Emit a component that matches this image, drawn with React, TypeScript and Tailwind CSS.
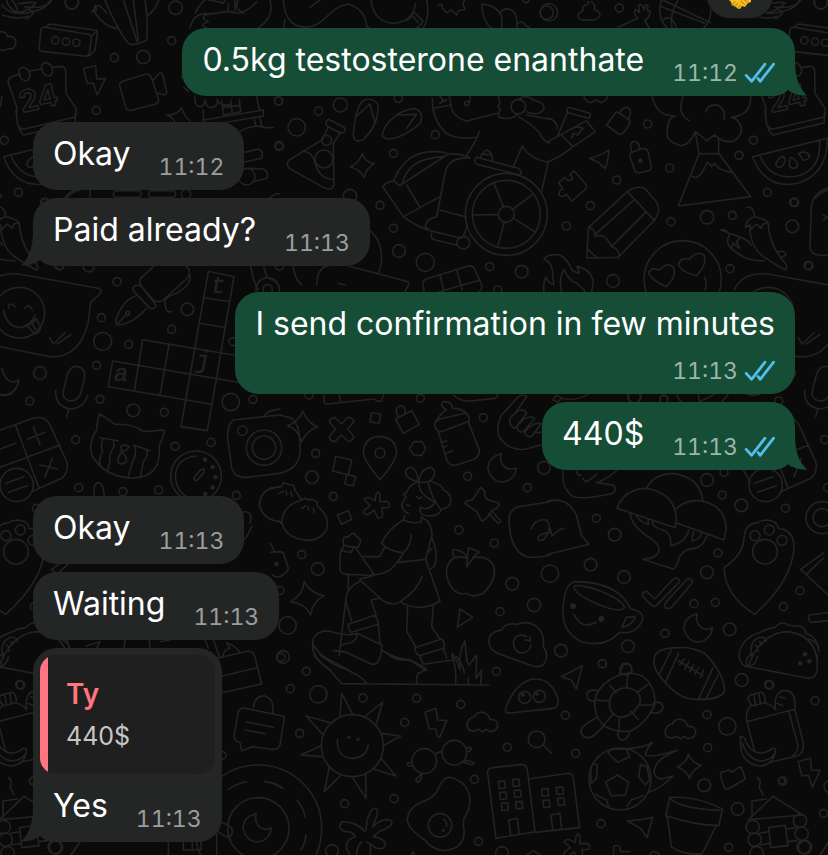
import React from 'react';
import clsx from 'clsx';

interface Quote {
  author: string;
  text: string;
}

interface Message {
  id: number;
  text: string;
  time: string;
  mine?: boolean;
  tail?: boolean;
  // time sits on its own line under the text
  stacked?: boolean;
  quote?: Quote;
}

const groups: Message[][] = [
  [{ id: 1, text: '0.5kg testosterone enanthate', time: '11:12', mine: true, tail: true }],
  [
    { id: 2, text: 'Okay', time: '11:12' },
    { id: 3, text: 'Paid already?', time: '11:13', tail: true },
  ],
  [
    { id: 4, text: 'I send confirmation in few minutes', time: '11:13', mine: true, stacked: true },
    { id: 5, text: '440$', time: '11:13', mine: true, tail: true },
  ],
  [
    { id: 6, text: 'Okay', time: '11:13' },
    { id: 7, text: 'Waiting', time: '11:13' },
    { id: 8, text: 'Yes', time: '11:13', tail: true, quote: { author: 'Ty', text: '440$' } },
  ],
];

export default function App() {
  return (
    <main className="relative min-h-screen overflow-hidden bg-[#0a0a0a] font-['Inter','Liberation_Sans',sans-serif]">
      <Wallpaper />
      <Reaction />
      <div className="relative flex flex-col gap-[26px] px-[33px] pt-7 pb-3">
        {groups.map((group) => (
          <ol key={group[0].id} className="flex flex-col gap-2">
            {group.map((message) => (
              <Bubble key={message.id} message={message} />
            ))}
          </ol>
        ))}
      </div>
    </main>
  );
}

function Bubble({ message }: { message: Message }) {
  const { text, time, mine, tail, stacked, quote } = message;

  return (
    <li
      className={clsx(
        'relative rounded-3xl',
        mine ? 'self-end bg-[#154d37] text-[#154d37]' : 'self-start bg-[#242626] text-[#242626]'
      )}
    >
      {tail && <Tail mine={mine} />}
      {quote && <QuoteBox quote={quote} />}
      <div className={clsx('relative flex px-5 pt-2.5 pb-[7px]', stacked ? 'flex-col gap-[9px]' : 'items-end gap-7')}>
        <p className={clsx('text-[32px] leading-[44px] text-white', !stacked && 'mb-[7px]')}>{text}</p>
        <div className="flex items-center gap-1.5 self-end">
          <time className={clsx('text-[23px] leading-8 tabular-nums', mine ? 'text-[#9bb5aa]' : 'text-[#9c9d9d]')}>
            {time}
          </time>
          {mine && <ReadTicks />}
        </div>
      </div>
    </li>
  );
}

function QuoteBox({ quote }: { quote: Quote }) {
  return (
    <div className="px-[7px] pt-[7px]">
      <blockquote className="flex overflow-hidden rounded-2xl bg-[#1f1f1f]">
        <span className="w-2 bg-[#ff7580]" />
        <div className="py-[18px] pl-[18px]">
          <cite className="block text-[28px] leading-[43px] font-semibold text-[#ff7580] not-italic">{quote.author}</cite>
          <p className="text-[25px] leading-10 text-[#c6c6c6]">{quote.text}</p>
        </div>
      </blockquote>
    </div>
  );
}

function Tail({ mine }: { mine?: boolean }) {
  return (
    <svg
      className={clsx('absolute bottom-0', mine ? '-right-3' : '-left-3 -scale-x-100')}
      width="42"
      height="40"
      viewBox="-30 -40 42 40"
      fill="currentColor"
      aria-hidden="true"
    >
      <path d="M0-36C0-18 4-8 12-.5C6 0-2-2-7-6C-11-2-16 0-24 0L-26-20Z" />
    </svg>
  );
}

function ReadTicks() {
  return (
    <svg width="31" height="22" viewBox="0 0 31 22" fill="none" stroke="#53bdeb" strokeWidth="2.8" strokeLinecap="round" strokeLinejoin="round" role="img" aria-label="Read">
      <path d="M2.200 13.400L7.600 19.300L21 2.200M14 16.500L16.200 19.300L29.600 2.200" />
    </svg>
  );
}

function Reaction() {
  return (
    <div className="absolute -top-7 right-[55px] z-10 flex h-[46px] w-[66px] items-end justify-center rounded-full bg-[#242626] pb-[9px] ring-1 ring-[#101010]">
      <svg width="24" height="24" viewBox="0 0 24 24" role="img" aria-label="Handshake">
        <path fill="#f8c027" d="M1 4L23 4V17L20 18L17 22L14 21L12 24L9 23L7 21L4 20L3 17L1 15Z" />
        <path fill="none" stroke="#d98a12" strokeWidth="1.300" strokeLinecap="round" d="M4 20L7 17M7 21.500L10 18M10 23L12.500 20M13 16L17 20M16 14.500L20 17.500" />
      </svg>
    </div>
  );
}

type Circle = [number, number, number];

interface Patch {
  x: number;
  y: number;
  paths: string[];
  circles: Circle[];
  dots?: Circle[];
}

const MOON = 'M-2-43Q-42-33-42 2Q-32 42 3 42Q38 37 43 0Q18 10 3-8Q-9-23-2-43Z';
const CLOUD = 'M-26 28Q-46 25-45 5Q-38-15-23-15Q-18-30 2-29Q20-25 24-7Q47-10 47 12Q42 30 22 28L12 22L2 30L-10 22Z';
const ASTERISK =
  'M3-40Q12-35 8-10L32-10Q42-2 35 7L15 8L17 32Q10 42 2 38L-8 15L-30 30Q-42 28-38 15L-20 2L-38-15Q-35-25-22-22L-5-13Q-5-35 3-40Z';

// Doodles of the chat wallpaper, drawn at three times their size
const patches: Patch[] = [
  {
    x: 0,
    y: 0,
    paths: [
      'M5 15C25 40 60 45 100 35M8 45C40 58 70 55 85 48M20 0Q25 28 55 38Q48 10 35 0M55 38Q90 30 108 8Q80 5 55 12M100 35Q140 25 155 0',
      'M315 0C330 40 360 100 385 130Q400 140 440 120Q445 60 435 0M370 0L412 125M400 0L415 120M350 85Q310 80 280 30M275 35L290 30L285 15M280 30Q290 0 320 40M440 50Q465 30 477 0',
      'M122 90Q125 80 135 82L265 103Q275 105 274 115L268 158Q266 170 255 168L125 154Q116 152 118 142ZM135 82L150 72L285 90Q293 92 292 100L285 150L268 168M274 108L292 92',
      'M0 95Q20 95 22 110Q45 105 48 128Q45 150 25 146Q10 155 0 148',
      'M60 222L35 230Q22 236 25 250L50 320L50 345M88 213L128 206M155 203L185 199Q197 202 197 215L198 280L228 325Q232 345 222 352L70 388Q58 385 52 370L48 330M226 340V368L72 405Q60 398 56 378',
      'M58 222Q52 205 68 202Q88 205 90 225Q88 243 75 242Q60 238 58 222ZM126 208Q120 191 136 188Q156 191 158 211Q156 229 143 228Q128 224 126 208Z',
      'M250 205L287 197L290 237L316 236L292 285L280 250L262 249Z',
      'M360 262Q355 248 370 243L435 223Q450 220 455 235L475 295Q478 308 465 313L395 331Q380 332 377 320ZM460 240L478 220Q486 217 489 228L500 275Q500 286 490 284L475 280',
      'M524 366Q522 355 500 345Q535 345 545 322Q552 350 570 362M545 235Q545 225 552 218M552 262L565 275',
      'M585 288Q583 320 600 320Q615 318 615 300Q618 325 635 322Q655 320 652 298Q655 318 690 315M665 300L670 345L722 335L718 300M692 300L697 340M668 322L720 316M610 360L790 330V348L610 378ZM610 330V360M770 290L778 330M820 382Q790 385 780 378Q740 380 720 395L690 400M762 355L768 378M780 352L785 378',
      'M722 460L775 447Q792 455 785 475L722 488M745 505L790 507Q808 515 800 535L760 545M345 572Q335 583 345 592H418Q430 583 418 572ZM450 572Q440 583 450 592H522Q532 583 522 572ZM200 594Q215 575 240 570M270 570V592M810 594Q825 578 840 582',
    ],
    circles: [[216, 7, 20], [527, 23, 20], [515, 122, 12], [430, 171, 20], [343, 173, 12], [289, 331, 12], [13, 421, 12], [55, 577, 12], [835, 303, 12], [837, 437, 12], [137, 607, 12], [166, 121, 11], [198, 125, 11], [229, 128, 11], [740, 530, 25], [558, 582, 14]],
  },
  {
    x: 180,
    y: 0,
    paths: ['M45 40Q60 10 75 0M85 0Q120 5 130 10L135 0M175 0Q160 25 190 40M230 5Q210 30 175 40Q140 30 110 40Q70 40 70 55L85 65Q55 75 80 84M270 0Q285 50 235 84M30 84Q40 40 80 40M145 10V32M165 0V30'],
    circles: [],
  },
  {
    x: 270,
    y: 0,
    paths: [
      'M40 0Q45 90 120 80C170 70 180 20 235 12Q290 30 290 84M45 60L40 84M120 22L150 0M290 78L298 84M303 0Q310 65 370 70Q430 65 437 10M470 0Q480 50 460 84M408 62Q425 55 430 35L458 62Q455 80 430 88M430 50L445 68',
      'M505 15L515 12L518 25L530 38L545 30L560 45L565 32L585 28L578 10L585 0M665 84Q640 70 635 12Q680 15 695 50V84M690 40Q700 20 725 30Q745 45 740 84M745 70Q755 60 765 75L780 84',
      'M250 405C252 370 258 320 280 302C300 292 325 300 325 325C322 370 300 400 280 418C265 428 250 422 250 405ZM258 350L300 312L315 370M338 400C345 370 380 335 425 326C455 325 460 350 450 370C425 395 385 415 355 417C342 415 335 410 338 400ZM378 345L440 343L410 385',
      'M175 358L222 382Q230 392 220 398L212 398Q200 395 172 378Q162 370 175 358ZM175 380L158 418L58 480Q45 492 58 505L160 562Q185 575 192 555L190 430L212 398M95 455Q125 450 135 490Q150 540 190 537',
      'M277 460Q285 488 313 491Q288 503 283 532Q270 508 241 500Q268 490 277 460Z',
      'M700 620L672 550M728 628L788 583M731 655L793 695M703 667L684 736M685 644L607 645',
      'M372 540C400 470 450 445 530 458M395 555C410 500 440 475 520 470M338 560Q350 545 372 542Q388 560 392 555L535 462M338 560L400 650Q440 680 475 690M400 650L510 590M410 555L450 622M535 462Q575 460 600 474Q535 470 525 520L500 650Q470 655 465 680L480 692L575 715M510 630L585 650M590 680L580 710M485 700Q480 715 495 720L560 735',
      'M620 472L745 505Q758 515 750 525L620 493Q608 485 620 472ZM632 472L635 462L665 465L668 482M640 460Q650 440 663 462',
      'M487 295Q485 360 530 400Q560 420 620 412M490 325L543 315Q545 350 590 363Q640 350 685 340M510 290L520 300L510 310L530 300M543 315L538 290M590 465Q615 430 628 395M685 290L690 310L683 320L690 325L685 350Q720 365 745 340M770 345L840 358M745 350Q800 380 815 410Q830 430 840 428M730 500L757 438Q775 475 835 487L815 573M745 298Q770 280 790 300Q830 310 820 330Q800 350 770 335M600 290Q602 318 585 317Q580 300 598 305',
      'M290 685Q345 720 332 800L325 820M235 798L415 845Q420 850 405 875M140 855Q140 800 180 796M70 800Q75 840 95 855M0 838Q15 840 25 855M205 850L225 855',
    ],
    circles: [[26, 303, 12], [146, 333, 12], [211, 315, 21], [385, 295, 12], [80, 382, 26], [28, 439, 12], [370, 460, 12], [496, 404, 12], [240, 588, 20], [330, 616, 12], [370, 685, 12], [387, 753, 19], [466, 787, 27], [659, 800, 12], [755, 815, 19], [28, 798, 12], [830, 38, 20], [768, -2, 10], [170, 421, 15], [162, 477, 27], [709, 643, 123], [709, 643, 102], [709, 643, 24], [580, 728, 19], [745, 320, 22]],
  },
  {
    x: 548,
    y: 0,
    paths: [
      'M130 5Q145 18 138 28Q160 35 155 48Q148 62 120 60Q90 62 90 48Q92 35 105 32Q100 18 115 15Q125 12 120 5M210 82L270 55M290 60L303 84M270 55Q255 40 262 28L275 38L272 15Q285 10 288 30L293 15Q303 12 298 32Q310 30 305 42Q300 60 290 60',
      'M345 0L487 68M340 20L470 70M372 84Q365 40 390 0M345 60Q370 40 385 84M680 55Q690 60 705 35L690 30M678 20Q740 30 755 0',
      'M391 618L453 462L512 460L608 590ZM453 462L442 395Q425 435 400 437Q350 425 358 390Q360 350 383 348Q325 350 313 290M442 395Q470 415 475 423L500 405L512 415V460M512 415Q535 430 560 422Q590 400 575 370Q565 355 550 352Q610 345 608 290M432 528Q445 540 460 520Q475 495 478 487Q485 490 490 500L500 490Q515 515 555 517M423 362Q385 340 405 290M473 335Q480 312 510 315Q535 330 528 358',
      'M108 290Q115 308 130 308L142 300L160 308Q178 300 178 288M178 372L205 335Q215 338 245 362Q248 372 225 400Q210 405 205 397L180 378Q175 375 178 372M215 338Q222 322 240 322Q255 335 240 358',
      'M250 458L285 445Q297 445 300 455L310 500Q308 512 298 513L272 519Q260 516 258 505L246 470Q245 462 250 458M252 457Q240 430 258 424Q275 425 275 447',
      'M62 322L125 340Q130 350 122 355L60 338Q52 330 62 322M58 338L28 410M0 425L55 395L115 362L142 395L75 440L40 405M0 485Q40 470 75 440M0 355Q25 360 28 385M65 390Q85 375 105 385Q90 400 90 405L75 400L70 415',
      'M125 475Q165 465 182 450Q182 480 172 505Q155 492 153 488L125 475M78 512L115 555Q118 560 112 568L72 603L55 583Q42 595 33 585Q32 570 45 568L32 548L50 532Q60 548 72 538Q75 528 65 525Z',
      'M122 682L238 575Q265 555 290 565L325 605Q340 630 320 660L210 772L116 774ZM238 575L320 662M258 600L145 700M295 635L190 740M122 682Q140 685 142 710Q170 695 190 740Q215 745 213 772M117 745L145 772',
      'M614 470L838 415Q840 520 750 550Q650 570 614 470ZM635 465Q670 550 760 525Q820 500 815 422M683 495Q690 470 708 470Q715 490 700 500Q688 505 683 495ZM728 472Q750 480 748 500Q735 510 725 500Q722 485 728 472ZM752 460Q775 450 785 468Q780 482 765 480Z',
      'M595 622Q615 615 620 650M592 683Q595 655 620 650Q650 655 660 668L645 672L640 685L625 672L610 687L605 675ZM605 687Q610 740 640 765Q690 800 712 810Q720 805 712 790Q665 740 660 668M518 690Q530 685 545 703Q530 730 550 745L555 730L575 745L565 725L577 712ZM577 712Q600 720 610 735M550 745Q590 785 648 782M690 755Q710 750 715 765L700 772',
      'M355 860Q310 840 302 820Q305 800 335 810Q355 785 375 800Q390 825 355 860ZM445 828Q400 815 392 795Q395 770 425 778Q445 750 468 765Q480 790 445 828ZM470 832Q478 850 472 870',
      'M860 560Q795 570 790 620L786 745Q790 765 820 766H860M825 645L838 652L827 660',
    ],
    circles: [[3, 37, 26], [214, 24, 12], [818, 7, 20], [299, 372, 12], [365, 504, 12], [573, 466, 12], [206, 540, 12], [127, 617, 12], [55, 678, 12], [369, 665, 12], [477, 652, 20], [553, 646, 12], [737, 607, 12], [733, 679, 19], [546, 806, 12], [780, 797, 12], [195, 843, 19], [412, 30, 77], [404, 838, 116]],
    dots: [[277, 482, 7]],
  },
  {
    x: 360,
    y: 235,
    paths: [
      'M193 171L188 145Q190 135 205 130L325 93Q340 90 345 105L365 150Q368 165 355 171M240 120L252 171M290 105L307 165M205 180L360 135',
      'M552 72Q565 55 600 60Q625 75 635 105L655 115Q660 105 650 95Q690 100 700 140L695 171M552 72Q580 85 578 120L582 150Q565 145 557 125Q548 150 552 171M605 171Q595 130 612 103Q625 135 650 145Q670 160 675 171',
    ],
    circles: [[413, 165, 12]],
  },
  {
    x: 600,
    y: 235,
    paths: ['M230 477Q235 495 245 500M295 478L298 500L340 480M385 477Q375 490 365 500M440 477Q460 485 480 477'],
    circles: [[104, 485, 19], [191, 493, 12]],
  },
  {
    x: 0,
    y: 265,
    paths: [
      'M-44 75Q-20 20 56 27L295 70Q310 75 298 88L272 112L265 170Q240 280 150 275L0 245M10 135Q20 185 60 188Q95 180 105 150M25 128Q28 108 45 125M75 130Q85 112 97 135M80 182Q100 175 108 160L122 185Q120 205 105 207L80 182M95 172L108 195M148 218L160 237L195 203M172 237L213 208',
      'M460 5L422 40Q415 55 425 65L460 105Q475 115 490 105L550 50Q572 35 568 15L560 5M405 62Q395 70 402 80L450 130Q465 135 468 120L425 65Q415 58 405 62M405 93Q365 110 348 165Q345 180 358 180Q400 175 440 130M350 178L378 150M570 30Q575 60 530 85Q495 95 495 110Q495 145 515 140',
      'M625 19L702 35L622 497L543 485ZM613 98L689 110M598 175L672 187M428 224L750 278M338 288L750 358M338 288L325 365L635 418M428 224L403 378M507 238L480 390',
      'M752 5Q760 50 775 75M790 0L800 35M5 310Q20 365 57 345Q50 385 15 390L0 388M202 330Q212 300 235 305Q258 312 253 340L242 385Q232 412 208 407Q185 400 190 378ZM167 375Q165 425 210 432Q250 430 263 392M206 433L200 455',
      'M-17 615Q-60 520 0 495L100 460Q135 450 150 480L200 590Q208 620 185 640L95 680M47 482L117 670M0 607L180 540M0 552L47 535M83 522L135 502M100 485L120 540M120 600L172 612M157 580L135 635M17 655L72 635M25 682L82 662M-17 615L3 650',
      'M298 447Q315 455 345 478Q400 475 430 500L492 495Q495 505 478 540Q480 590 465 610Q440 645 380 638Q310 630 275 570Q265 530 290 495Q292 465 298 447ZM300 518L355 527M400 540L450 557M310 520Q300 540 308 560Q295 580 300 600M340 525L342 545Q325 570 330 590L322 620M405 545Q410 570 398 590L385 632M440 555Q445 575 430 590L422 632M362 545Q375 535 387 545Q380 560 365 558ZM365 562Q350 580 355 595Q370 600 380 590Q380 570 365 562',
      'M588 573Q528 580 526 635Q530 680 560 695M613 612Q605 610 595 622L582 638Q582 650 592 645L612 622ZM283 693Q278 655 295 653Q310 655 313 693',
      'M840 450L700 465Q680 480 683 520L695 610Q705 640 740 637L840 625M795 450Q805 435 840 432M840 665Q780 670 778 720Q790 765 840 770M722 755Q725 735 745 742Q758 750 750 775M725 830Q735 830 755 785',
    ],
    circles: [[58, 143, 76], [351, 50, 12], [304, 158, 12], [386, 238, 12], [308, 229, 27], [515, 193, 12], [562, 133, 19], [699, 230, 12], [290, 301, 12], [120, 324, 19], [89, 408, 12], [300, 403, 12], [400, 436, 19], [493, 442, 12], [692, 411, 26], [759, 403, 12], [227, 524, 12], [525, 544, 12], [633, 532, 12], [727, 497, 14], [236, 668, 12], [369, 680, 12], [476, 675, 12], [709, 691, 12], [180, 2, 12], [266, 5, 16], [383, 145, 6], [803, 73, 35], [803, 73, 14], [50, 660, 50], [588, 634, 76], [792, 548, 53], [792, 548, 35]],
    dots: [[615, 584, 7], [638, 606, 7], [646, 636, 7], [638, 667, 7], [616, 687, 7]],
  },
  {
    x: 270,
    y: 385,
    paths: [
      'M30 90L65 100Q90 120 90 180Q95 240 50 258L30 265M98 78Q110 110 142 126Q108 138 95 170Q82 130 52 122Q85 112 98 78Z',
      'M195 98L214 117L233 98Q245 95 252 110L233 132L252 155Q245 172 233 168L214 150L195 170Q178 168 178 155L196 132L178 110Q182 97 195 98Z',
      'M305 83L332 88L327 115L300 110ZM197 214L245 225L235 270L188 258ZM230 268L257 275L250 303L225 297ZM202 390L235 377L245 403L215 418Z',
      'M330 284Q280 225 280 200Q285 155 330 154Q378 158 380 202Q375 235 330 284ZM376 102L425 77L448 118L400 145ZM385 95Q370 70 390 62Q408 62 405 85M432 170H456L467 190L455 211H432L418 191Z',
      'M495 122Q492 110 510 102L585 85Q600 90 598 108L520 138Q500 145 495 122ZM497 110Q515 80 530 75Q505 60 520 50Q545 48 548 70Q575 70 590 85M505 140L530 225Q540 245 560 240L615 222Q630 210 628 195L595 112M513 172L530 168M518 187L530 183M525 205L547 198',
      'M770 35Q760 25 745 35L695 90Q675 130 690 160Q720 200 770 192L830 175M770 35L735 85M720 110Q715 100 735 85Q760 65 770 85L735 130Q720 125 720 110M740 125Q770 85 795 100L760 140Q745 145 740 125M765 140Q790 110 815 115L785 155Q765 155 765 140M800 143L830 140',
      'M162 30V50Q165 58 175 57L310 42M208 30L212 50M315 42Q320 52 335 48L340 30M550 30Q570 50 600 48L675 40Q685 35 682 28',
      'M632 307L645 320Q640 335 655 345L688 355Q685 372 668 375Q650 405 635 408Q630 400 620 380L585 355Q590 345 607 345L632 307ZM655 385L685 415Q695 412 690 405L665 378',
      'M35 410Q40 360 95 345L105 340L115 345L125 343L140 350L143 365Q175 390 172 425Q160 465 110 466Q45 460 35 410ZM95 370L107 362M113 365L116 375M130 370L132 382M0 310L35 305L40 293L55 298L72 302L75 315L95 345M30 410L35 417M28 325L40 318M48 318L50 330M62 320L66 334',
      'M840 350L745 365Q715 375 717 410Q722 500 770 515Q800 520 840 510M783 432Q795 400 830 405Q850 430 820 465Q800 470 805 455Q815 445 840 442',
      'M590 520Q565 510 545 523Q520 550 535 590Q555 635 590 625Q610 640 640 625Q680 585 672 545Q655 510 610 518L590 545L595 488L628 500L608 518M590 520Q590 500 550 493Q545 515 560 520',
      'M446 290Q400 280 408 255Q425 235 440 265L446 290Q455 245 485 248Q505 265 480 288Q465 295 446 290M410 322Q420 295 446 290Q445 330 495 350Q485 375 455 370M480 288Q520 300 520 315Q545 325 542 350Q540 370 515 372Q505 400 460 390Q445 385 452 365M475 295Q485 340 510 370M410 322L400 328L408 335L395 360Q400 380 415 385M405 390L400 405Q430 418 453 410L455 395M410 360L420 362M440 335Q450 345 455 335',
      'M400 405Q355 430 335 475Q355 500 400 503M457 398Q485 410 486 450L467 523L385 532M423 447Q425 480 400 503Q370 560 330 567L310 570M486 460Q505 500 495 540Q488 550 480 553M345 485L328 515H282M486 490L475 500',
      'M220 470Q215 455 235 455Q250 435 260 455Q275 460 270 475L265 485Q245 490 220 480ZM220 485L215 495Q235 505 245 500L250 485M258 490L310 565Q305 575 285 570L235 568Q210 570 210 550V510Q215 490 220 485',
      'M268 583Q300 575 310 570M268 583L340 648Q370 665 390 650Q440 620 457 573M467 523L510 648Q450 685 390 650',
      'M268 590Q225 610 228 650L245 708M235 570V610M228 640L207 812M303 645L318 690M330 640L303 645M235 718L310 692Q322 692 325 718L245 742Q235 740 235 718ZM262 745L335 780Q335 840 305 838L225 800L190 797M325 718L330 775M262 745Q260 770 235 775L213 780M262 745Q240 755 185 740Q150 730 130 760Q120 800 150 830L180 855M130 780Q150 815 190 830L235 855M413 665L410 740L437 785M490 660L485 725L510 762M435 788L515 762Q525 770 522 790L447 812Q435 805 435 788M335 795Q370 820 420 825L465 855M450 815L460 838L550 825M520 790L530 820',
      'M545 805Q560 820 570 855M570 855Q565 800 585 768L590 830M103 590Q120 625 162 632Q128 650 122 690Q105 655 62 650Q98 630 103 590ZM570 672L608 697L562 726Z',
      'M657 770Q655 740 695 735Q705 712 740 718Q775 705 800 725Q825 745 820 785Q840 810 820 840Q800 850 780 840L690 808Q655 795 657 770ZM770 755Q740 740 730 770Q730 800 755 805Q780 800 783 780M765 765L782 768L780 755',
      'M0 502L30 500Q40 500 42 510L55 550Q50 570 20 577L8 570M0 475Q10 485 12 500',
    ],
    circles: [[117, 30, 12], [451, 40, 12], [640, 98, 12], [137, 205, 12], [126, 277, 19], [190, 334, 12], [593, 274, 12], [772, 308, 12], [822, 248, 19], [330, 204, 15], [567, 435, 12], [673, 474, 12], [95, 509, 12], [143, 552, 19], [727, 596, 19], [792, 660, 20], [690, 680, 12], [30, 616, 12], [53, 721, 26], [39, 816, 19]],
    dots: [[19, 537, 7]],
  },
  {
    x: 548,
    y: 385,
    paths: [
      'M45 258Q40 310 75 335Q110 345 195 325Q208 310 195 300L145 293M150 293Q185 275 205 258M85 258Q90 275 100 270M105 280Q110 295 125 285L145 268M0 348Q60 335 85 390L100 450L123 478L0 508M6 430L12 453Q35 430 47 430M15 45L25 30L40 38L30 52ZM40 40Q80 50 120 28',
      'M207 370Q230 310 295 310Q380 325 385 400L382 428ZM295 310Q320 265 375 266Q455 275 465 347M380 375Q410 345 450 347Q530 355 535 430L528 465L388 415M247 388Q250 420 300 455Q340 480 332 500Q325 520 285 523L375 552Q385 550 395 515Q410 490 440 490Q465 485 477 452M265 392Q280 415 302 418L300 402M312 408Q315 430 345 435Q372 445 368 482Q410 475 423 435M437 440Q432 455 432 468Q455 465 460 445',
      'M528 548Q585 510 588 460Q590 415 630 413Q640 405 660 405Q690 410 690 430Q740 435 738 490Q730 590 620 688Q530 630 528 548Z',
      'M78 605Q85 595 150 615Q225 645 230 668Q215 685 150 658Q75 625 78 605ZM80 590Q210 590 248 672Q290 680 283 705Q265 750 215 742Q170 790 100 770Q40 740 45 670Q50 595 80 590ZM235 697L262 695Q255 720 222 727ZM78 688Q100 735 145 712',
      'M285 635Q280 618 297 620L320 642L375 583Q392 573 395 590L325 662Q317 667 310 660ZM355 650L415 585Q430 575 434 592L370 668Q350 675 350 660Z',
      'M573 815Q575 760 640 740Q660 730 680 728Q700 705 720 720Q740 725 755 722Q775 730 772 745Q810 755 812 800M600 845Q640 740 720 740Q800 750 808 830M612 820Q600 770 635 757Q655 755 655 770M622 780L628 785M625 795L632 798M635 770L642 778',
      'M758 553L828 503M758 553L840 630M775 568L825 520M860 680L785 690Q775 700 790 712L860 705',
    ],
    circles: [[258, 35, 19], [348, 43, 12], [477, 285, 19], [528, 262, 12], [523, 330, 12], [580, 361, 19], [712, 370, 12], [145, 400, 12], [200, 449, 19], [510, 504, 12], [477, 562, 19], [128, 539, 19], [228, 576, 19], [6, 566, 26], [438, 656, 12], [502, 652, 12], [756, 617, 12], [706, 665, 12], [545, 733, 19], [351, 745, 12], [240, 784, 19], [39, 797, 19], [163, 836, 12], [234, 852, 18], [822, 398, 48], [822, 398, 27], [621, 452, 15], [664, 435, 15], [702, 466, 15], [651, 500, 37]],
    dots: [[75, 664, 9], [160, 702, 9], [771, 808, 7], [757, 835, 7], [784, 829, 7]],
  },
  {
    x: 0,
    y: 570,
    paths: [
      'M650 265L745 243Q762 245 765 262L785 342L658 370M658 320L772 293M670 262Q668 240 690 235L680 218Q710 230 720 248',
      'M715 425Q720 412 735 415L845 437Q855 440 852 450L840 525Q835 540 815 538L755 530L725 543L720 518Q705 515 702 500ZM760 412Q765 375 795 378Q825 388 818 428M738 455L820 472M735 480L795 491',
      'M685 658Q710 640 740 635M795 635Q830 640 848 655M655 750L690 770Q705 785 690 800Q680 805 655 785M650 790V855M505 815V855M550 815V840H603V815M577 815V840M215 855L240 815',
      'M375 210L372 235M448 210L450 235M480 215L510 210M258 228L300 215L290 235M615 210L625 235M640 210L660 265M180 207Q205 215 210 235',
    ],
    circles: [[62, 345, 12], [666, 556, 12], [98, 632, 10], [775, 775, 190], [775, 775, 92], [168, 832, 20], [843, 262, 12]],
  },
  {
    x: 270,
    y: 655,
    paths: [
      'M210 183L215 115L248 178M282 187L338 141L318 210M333 235L392 243L340 272M333 310L378 363L312 343M287 358L288 430L248 368M210 363L163 410L178 335M155 305L92 300L153 273M157 237L108 183L180 203M202 253Q200 310 248 310Q288 308 295 270',
      'M132 0Q150 25 180 45L215 86L656 90M150 0Q190 30 220 40Q270 60 290 84M357 0Q375 18 420 15L460 35L470 44L445 55Q437 70 440 86M545 0Q560 30 557 86M560 5Q580 30 583 55M590 0Q590 25 597 30L620 0L618 70L635 45L632 86M595 70V86',
      'M465 172L498 160L503 195L530 197L510 245Q505 250 502 242L497 222L478 222Z',
      'M708 170Q703 165 715 140Q750 70 800 72Q845 75 863 130Q870 155 850 160L720 174Q710 175 708 170ZM820 270L845 295',
      'M498 297Q505 288 517 292M425 322Q410 322 412 330Q420 337 427 330M455 355L437 375Q440 385 450 378L457 355M588 283Q600 272 605 282Q600 290 590 290M582 318Q595 315 612 322Q612 332 600 328L582 322',
      'M505 400Q520 365 540 367Q595 380 600 435Q600 465 582 490Q578 505 583 530Q580 585 520 587Q480 580 465 555Q410 520 412 490Q415 460 450 443Q495 430 505 400ZM520 492Q532 500 530 515',
      'M285 530Q260 500 215 500Q200 525 230 530Q250 530 255 545Q225 555 230 580L240 600M288 525Q290 480 310 460Q325 458 322 480L308 515M308 515Q340 485 365 498Q370 515 330 528L310 545Q345 550 347 570Q340 585 320 580L290 560M260 600Q260 575 275 560M300 600L302 570',
      'M678 550L653 355Q650 340 668 338L755 328Q770 330 772 345L795 530ZM777 372L895 355Q908 355 910 370L929 518L795 532M722 542L716 495L742 490L748 538M848 525L843 480L870 475L875 520',
      'M685 379L704 378L706 399L687 400ZM728 373L747 372L749 393L730 394ZM689 412L708 411L710 432L691 433ZM732 406L751 405L753 426L734 427ZM694 445L713 444L715 465L696 466ZM737 440L756 439L758 460L739 461ZM815 402L834 401L836 422L817 423ZM819 436L838 435L840 456L821 457ZM859 397L878 396L880 417L861 418ZM863 430L882 429L884 450L865 451Z',
      'M80 435Q100 455 105 485M108 540Q105 565 93 585M10 385L38 400M770 600L790 587L810 600M425 600L428 590L435 600',
    ],
    circles: [[109, 49, 12], [61, 101, 12], [145, 118, 26], [279, 129, 12], [440, 130, 12], [572, 148, 12], [679, 49, 12], [404, 202, 12], [89, 235, 12], [712, 277, 12], [613, 373, 12], [224, 446, 12], [372, 431, 12], [626, 559, 12], [186, 588, 19], [696, 594, 19], [800, 253, 25], [247, 272, 93], [764, 127, 18], [808, 124, 18], [463, 318, 37], [553, 293, 37], [510, 511, 35]],
    dots: [[237, 247, 5], [264, 253, 5], [758, 119, 6], [801, 117, 6], [520, 526, 5]],
  },
  {
    x: 548,
    y: 655,
    paths: [
      'M40 65L103 32L85 102L70 75ZM238 498Q285 495 314 487L297 548Q285 530 278 520Z',
      'M140 140Q145 100 185 75Q240 40 285 65Q325 95 320 150Q300 200 250 228Q195 235 160 205Q138 175 140 140ZM185 140Q190 100 240 98Q285 110 275 145Q255 185 215 187Q180 175 185 140ZM215 58Q220 25 240 27Q255 35 250 55M140 138Q115 140 117 115Q125 100 152 108M150 187Q100 210 98 230Q110 260 140 240L168 212M210 230Q205 255 228 255Q245 245 243 230M315 145Q345 135 345 160Q335 180 305 172M185 90L205 113M240 52L235 98M300 88L268 112M318 150H275M270 193L248 168M212 228L215 187M165 212L195 178M140 135L185 138',
      'M320 5Q310 40 350 80Q390 130 440 133Q525 135 530 105Q525 50 470-5Q430-25 390-22Q325-20 320 5ZM335 55L370-15M352 82L392-5M452 132L495 38M475 130L510 60M392 18L465 62M408 12L395 30M423 20L410 42M437 30L425 50M452 38L440 58M467 45L457 68',
      'M573 5Q580 35 600 35L780 70Q810 70 808 30V0M600 35Q585 10 615-5M628 5Q625 30 600 35',
      'M600 130Q603 118 615 118L640 112Q650 115 652 135L650 143L615 152Q603 145 600 130ZM618 120L622 148M632 115L638 146M610 152Q590 170 597 200L620 290M650 143Q675 150 683 165M597 200L740 163Q745 105 710 107Q675 110 683 165M740 163L765 260Q770 290 750 302L665 322M722 168L750 270Q750 290 735 302M695 125L710 130M687 145L704 152',
      'M577 245L590 248Q600 290 640 295Q665 290 672 280L683 282Q680 330 635 333Q580 325 578 270ZM583 265Q600 315 640 318Q670 315 680 295M517 362L520 352L545 345L552 352L570 338L580 337L592 372L540 402Q530 402 528 395ZM628 367Q640 375 635 390Q630 398 640 408L645 420',
      'M750 320L787 310L790 345L816 346L793 397L782 362L762 362Z',
      'M208 360L242 382L232 420L190 423L173 382ZM180 295L190 283L235 282L245 305L210 322ZM130 385Q125 340 135 325L148 330L145 370ZM278 328L297 335L305 375L292 390L272 365ZM143 418L175 435L182 455M237 455L250 435L285 422M240 280Q290 278 313 262Q295 280 292 300Q310 310 388 286Q330 310 322 335Q310 365 340 372L375 363Q340 400 302 412',
      'M421 297Q432 325 460 331Q432 345 425 370Q412 342 387 336Q415 325 421 297Z',
      'M365 428Q440 420 523 462L513 512Q440 510 353 482ZM365 428Q390 460 515 466M358 485L370 575Q400 600 462 597L503 515',
      'M600 495L675 424L765 480L610 493M612 480V438L655 432M662 518L712 511L720 572L668 578ZM635 535L662 530M638 570L665 565M716 522L742 518M718 560L745 557M197 600V575Q205 568 215 575L218 590H245M815 600L840 565',
    ],
    circles: [[163, 26, 12], [52, 181, 12], [83, 295, 12], [477, 179, 12], [538, 214, 26], [581, 75, 19], [662, 89, 12], [801, 137, 12], [479, 278, 12], [469, 391, 19], [704, 378, 12], [569, 462, 19], [827, 475, 12], [159, 506, 12], [542, 577, 12], [319, 606, 16], [846, 395, 18], [216, 372, 93], [614, 516, 20], [620, 554, 20], [626, 594, 20], [756, 497, 20], [761, 536, 20], [767, 576, 20]],
  },
];

const stamps = [
  { d: MOON, x: 502, y: 468 },
  { d: MOON, x: 698, y: 628 },
  { d: MOON, x: 257, y: 828 },
  { d: ASTERISK, x: 377, y: 505 },
  { d: ASTERISK, x: 577, y: 847 },
  { d: CLOUD, x: 482, y: 722 },
  { d: CLOUD, x: 680, y: 729 },
];

const letters = [
  { char: 't', x: 218, y: 293 },
  { char: 'j', x: 203, y: 368 },
  { char: 'a', x: 121, y: 381 },
];

function Wallpaper() {
  return (
    <svg className="pointer-events-none absolute inset-0 h-full w-full" fill="none" stroke="#222323" strokeLinecap="round" strokeLinejoin="round" aria-hidden="true">
      <g id="doodles">
        {patches.map((patch) => (
          <g key={`${patch.x}-${patch.y}`} transform={`translate(${patch.x} ${patch.y}) scale(0.33333)`} strokeWidth="4.8">
            {patch.paths.map((d) => (
              <path key={d} d={d} />
            ))}
            {patch.circles.map(([cx, cy, r]) => (
              <circle key={`${cx}-${cy}-${r}`} cx={cx} cy={cy} r={r} />
            ))}
            {patch.dots?.map(([cx, cy, r]) => (
              <circle key={`${cx}-${cy}`} cx={cx} cy={cy} r={r} fill="#222323" stroke="none" />
            ))}
          </g>
        ))}
        {stamps.map(({ d, x, y }) => (
          <path key={`${x}-${y}`} d={d} transform={`translate(${x} ${y}) scale(0.33333)`} strokeWidth="4.8" />
        ))}
        <g fill="#222323" strokeWidth="0.5" className="font-['Liberation_Mono',monospace] text-2xl italic">
          {letters.map(({ char, x, y }) => (
            <text key={char} x={x} y={y} textAnchor="middle">
              {char}
            </text>
          ))}
        </g>
        <text x="22" y="113" transform="rotate(-13 22 113)" strokeWidth="1.500" className="font-['Inter',sans-serif] text-3xl font-bold">
          24
        </text>
      </g>
      <use href="#doodles" x="749" />
      <use href="#doodles" x="-749" />
    </svg>
  );
}
